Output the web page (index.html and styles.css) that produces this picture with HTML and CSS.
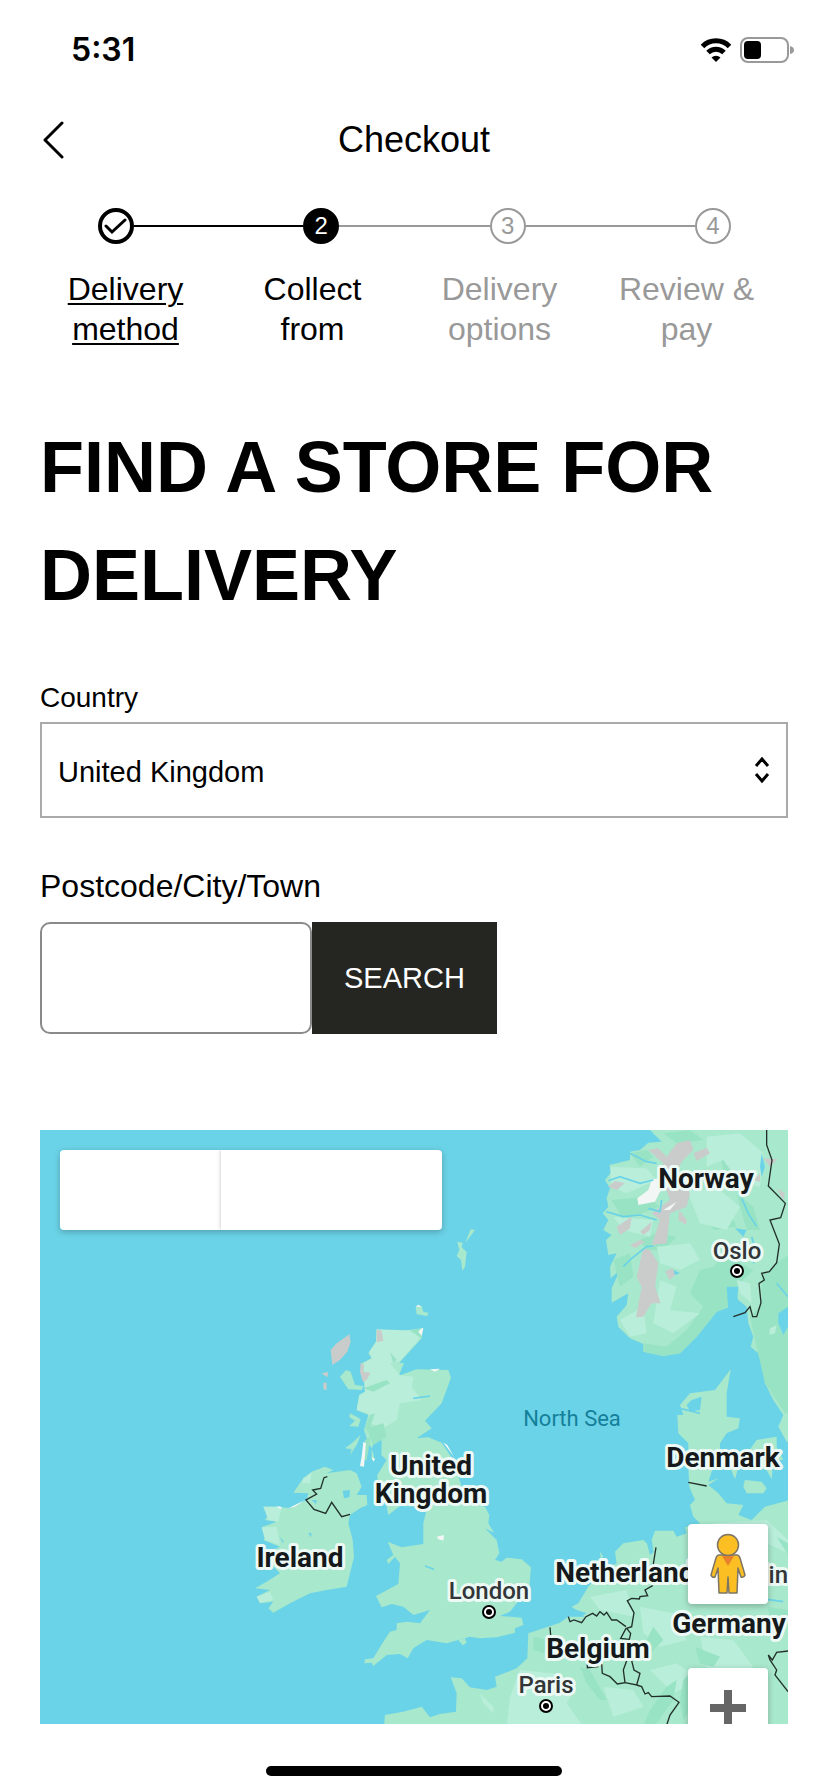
FILE: index.html
```
<!DOCTYPE html>
<html lang="en">
<head>
  <meta charset="UTF-8" />
  <meta name="viewport" content="width=device-width, initial-scale=1" />
  <title>Checkout</title>
  <link rel="stylesheet" href="styles.css">
</head>
<body>
  <div class="status-bar">
    <span class="time">5:31</span>
    <div class="status-icons">
      <svg width="32" height="24" viewBox="0 0 32 24" aria-hidden="true">
        <path d="M2.500 8.500a19 19 0 0 1 27 0" fill="none" stroke="#000" stroke-width="5" />
        <path d="M8 14.500a11.500 11.500 0 0 1 16 0" fill="none" stroke="#000" stroke-width="5" />
        <path d="M11.500 19.500a6.500 6.500 0 0 1 9 0L16 24z" />
      </svg>
      <svg width="54" height="26" viewBox="0 0 54 26" aria-hidden="true">
        <rect x="1" y="1" width="47" height="24" rx="7" fill="none" stroke="#999" stroke-width="2" />
        <rect x="4" y="4" width="17" height="18" rx="4" />
        <path d="M50 9q4 1 4 4t-4 4z" fill="#999" />
      </svg>
    </div>
  </div>

  <header class="top-bar">
    <button class="back-btn" type="button" aria-label="Back">
      <svg width="22" height="38" viewBox="0 0 22 38" aria-hidden="true">
        <path d="M20 2L3 19l17 17" fill="none" stroke="#000" stroke-width="3" stroke-linecap="round" stroke-linejoin="round" />
      </svg>
    </button>
    <h2>Checkout</h2>
  </header>

  <nav class="steps" aria-label="Checkout steps">
    <div class="track">
      <span class="circle done">
        <svg width="24" height="24" viewBox="0 0 24 24" aria-hidden="true">
          <path d="M2 12l6 6L21 6" fill="none" stroke="#000" stroke-width="3" stroke-linecap="round" />
        </svg>
      </span>
      <span class="line active"></span>
      <span class="circle current">2</span>
      <span class="line"></span>
      <span class="circle">3</span>
      <span class="line"></span>
      <span class="circle">4</span>
    </div>
    <div class="labels">
      <a href="#delivery">Delivery method</a>
      <span class="on">Collect from</span>
      <span>Delivery options</span>
      <span>Review &amp; pay</span>
    </div>
  </nav>

  <main>
    <h1>FIND A STORE FOR DELIVERY</h1>

    <form class="store-form">
      <label class="country-label" for="country">Country</label>
      <div class="select-wrap">
        <select id="country">
          <option>United Kingdom</option>
        </select>
        <svg class="arrows" width="16" height="26" viewBox="0 0 16 26" aria-hidden="true">
          <path d="M2 9l6-7 6 7M2 17l6 7 6-7" fill="none" stroke="#000" stroke-width="3" />
        </svg>
      </div>

      <label class="postcode-label" for="postcode">Postcode/City/Town</label>
      <div class="search-row">
        <input type="text" id="postcode" />
        <button class="search-btn" type="button">SEARCH</button>
      </div>
    </form>

    <div class="map">
      <svg class="map-canvas" viewBox="0 0 748 594" preserveAspectRatio="xMidYMin slice" role="img" aria-label="Map of stores">
        <g transform="scale(.33333)">
          <!-- Norway and Sweden -->
          <g transform="translate(1620 -30)">
            <path class="land" d="M210 30L245 65 205 68 180 90 150 95 150 120 88 135 95 155 75 180 90 205 80 235 85 260 68 280 85 300 70 330 95 345 78 360 85 405 110 400 90 440 92 475 120 450 95 505 95 548 145 520 140 555 110 590 115 620 150 655 190 672 190 695 250 708 300 700 350 650 410 575 450 560 455 500 475 540 500 560 505 610 520 650 512 680 535 700 545 730 555 790 580 840 610 885 595 920 620 965 630 965 630 30z" />
            <path class="land-dark" d="M630 400L590 430 545 470 545 550 510 590 530 680 555 790 615 880 630 880zM450 380L480 430 520 450 470 500 450 500 450 560 410 575 350 650 300 700 250 708 190 695 190 670 260 680 320 630 370 560 330 520 360 450 400 440z" />
            <path class="land-dark" d="M420 100L470 80 540 110 480 130 470 180 430 150zM250 40L330 30 370 60 290 70zM95 240L200 230 240 260 130 300zM150 100L200 90 220 110 180 140zM100 420L150 400 160 470 120 500zM180 360L230 340 290 350 250 390 200 390zM470 220L520 260 540 330 500 330zM380 280L440 260 470 320 400 330z" />
            <path class="land-light" d="M380 50L480 40 550 100 540 200 480 190 430 120 380 140zM90 140L200 145 230 180 140 220 95 200zM320 210L420 210 480 260 440 330 360 310zM230 380L330 370 360 420 300 450 240 430zM120 600L190 560 200 640 150 650zM240 480L290 500 270 570 360 580 280 640 220 610zM470 480L510 490 515 550 480 520zM570 625L590 615 585 640 568 645zM100 290L220 300 210 350 130 330z" />
            <path class="rock" d="M205 90L235 85 260 110 290 70 330 60 340 90 310 120 290 150 330 220 320 260 270 280 260 370 215 375 240 300 215 280 270 240 240 160 250 130zM340 100L380 83 390 100 350 123zM85 200L105 183 135 190 110 210zM110 320L155 290 150 325 120 345zM190 385L210 390 235 430 225 500 242 550 215 550 190 590 168 592 185 500 170 470zM150 375L180 360 195 365 165 385zM298 270L320 300 318 315 295 300zM255 455L275 445 290 460 270 480zM180 335L215 305 210 330 190 345zM550 115L592 118 570 140zM520 180L540 160 540 185zM590 205L615 220 610 240z" />
            <path class="snow" d="M240 140L265 200 240 215 225 245 175 255 172 235 205 210 215 180 235 175zM250 270L290 245 270 270z" />
            <path class="fjord" d="M85 182L120 170 180 190 220 180M78 275L130 290 180 285 230 300M205 265L240 275 245 240M130 440L155 415 200 380 220 378M150 100L200 125 230 130M485 235L505 280 530 320M515 350L530 400 520 430M590 490L624 530" />
            <path class="water" d="M545 100L555 140 545 170 540 140zM465 325L500 330 490 350zM440 500L475 500 470 560 445 570zM280 450L300 460 285 465zM595 580L624 560 624 620 610 645 595 610z" />
            <path class="border" d="M560 30V75L576 120 565 198 616 250 602 293 570 300 598 372 590 428 568 455 545 460 553 480 537 490 543 548 530 590 518 590 510 560 495 578 460 590" />
          </g>

          <!-- Great Britain -->
          <g transform="translate(600 240)">
            <path class="land" d="M548 355L545 385 478 458 492 460 476 497 530 478 625 480 633 503 605 580 555 632 575 655 530 685 565 682 605 698 640 750 665 830 665 870 735 890 748 915 745 940 762 968 735 955 770 990 778 1030 765 1050 785 1055 800 1043 845 1048 873 1072 868 1130 830 1180 810 1205 780 1218 845 1223 850 1245 825 1255 825 1268 770 1282 720 1285 690 1280 620 1300 560 1290 520 1315 503 1345 480 1332 440 1335 400 1368 395 1358 373 1360 375 1348 400 1345 430 1295 450 1265 470 1260 470 1240 500 1235 540 1240 570 1200 520 1215 490 1190 455 1182 425 1192 408 1158 475 1122 480 1060 465 1040 445 1062 440 1050 460 1035 443 995 485 1012 550 1002 550 940 562 890 480 888 445 915 440 890 460 860 412 820 412 795 440 750 424 735 425 690 402 700 395 715 385 700 372 660 385 615 362 605 350 600 358 555 375 545 372 515 365 460 395 445 385 430 408 395 410 358 430 370z" />
            <path class="land-light" d="M410 358L530 362 540 385 478 455 450 460 480 495 520 500 515 530 545 570 480 580 470 630 430 655 390 640 385 610 350 600 358 555 375 545 370 460 395 445 388 425 408 395z" />
            <path class="land-dark" d="M548 355L545 385 510 362zM380 655L430 640 440 680 400 705zM370 535L440 510 450 520 400 545zM375 690L392 680 380 750 372 750zM450 425L470 450 460 460zM390 615L405 610 385 665 375 655z" />
            <path class="land" d="M300 500L318 480 332 485 345 525 370 528 365 540 325 538zM330 610L350 620 362 628 355 650 328 648 345 632 328 622zM315 715L335 700 362 675 350 705 330 735 335 718zM652 95L668 98 665 112 680 125 675 170 667 183 663 150 650 138 658 120zM692 58L705 60 690 80 676 98zM527 290L545 288 550 305 565 308 562 318 530 313zM655 1290L675 1285 680 1298 668 1306zM395 715L405 750 395 750z" />
            <path class="rock" d="M328 373L332 395 322 425 300 450 277 465 272 420 290 400zM410 358L425 362 430 392 410 397zM362 458L372 465 370 485 392 488 380 510 368 515 360 485zM245 490L265 486 262 502zM250 518L260 518 260 540 250 538z" />
            <path class="snow" d="M370 695L378 700 372 770 360 768 365 740zM527 290L535 284 545 290zM545 355L550 355 545 378 535 365zM570 478L600 476 585 485zM610 698L622 705 642 740zM590 980L612 975 610 992 595 988zM395 740L405 748 400 755z" />
            <path class="fjord" d="M520 565L570 558M555 1068L582 1078" />
          </g>

          <!-- Ireland -->
          <g transform="translate(600 930)">
            <path class="land" d="M255 80L280 90 260 100 330 90 350 100 365 140 350 165 380 165 382 195 360 205 330 225 325 250 338 300 342 350 330 400 320 440 260 450 210 460 150 490 100 518 85 505 100 485 60 490 50 470 90 450 45 445 80 425 120 400 100 380 80 340 120 320 70 300 90 280 65 262 110 245 75 240 85 225 70 200 110 200 150 205 200 180 205 160 160 158 190 115 215 95z" />
            <path class="land-light" d="M70 200L125 200 115 245 85 240zM65 262L110 260 120 315 75 300zM190 115L215 98 210 130 185 130zM50 470L90 455 100 480 60 488z" />
            <path class="water" d="M308 152L330 150 328 172 312 175zM205 278L215 280 212 292zM118 288L132 306 128 308zM215 180L230 180 228 192z" />
            <path class="snow" d="M110 198L126 202 120 208zM145 205L195 180 165 200z" />
            <path class="border" d="M262 110L252 113 242 145 218 150 230 162 198 180 222 208 257 220 275 187 305 230 330 223" />
          </g>

          <!-- Denmark, the Netherlands, Belgium, France and Germany -->
          <g transform="translate(1380 930)">
            <path class="land" d="M692-212L645-150 570-140 540-105 550-75 532-75 535-20 565 10 565 80 568 140 585 180 570 195 580 230 600 250 555 262 560 280 530 290 520 272 465 272 455 300 460 330 430 300 370 310 345 335 350 370 300 400 265 440 235 490 215 500 255 530 205 530 180 548 85 580 82 655 50 685-15 710-10 740-40 750-90 742-115 715-148 712-130 760-132 815-180 822-210 832-235 800-290 815-345 825-348 860 870 860 870 180 795 200 755 240 715 225 730 195 680 190 655 160 625 135 655 115 625 125 640 80 660 30 660 10 680-20 715-35 720-65 680-70 680-140z" />
            <path class="land" d="M735 120L785 125 800 145 790 160 740 160 730 140zM690 80L715 80 705 118zM745 35L770 0 830-10 830 20 850 60 820 60 815 118 800 90 765 80zM300 335L310 350 302 355z" />
            <path class="land-light" d="M60 690L160 700 230 740 200 790 250 860 20 860 30 770zM270 470L380 450 400 530 300 510zM420 500L520 520 560 600 480 620 430 580zM600 590L700 600 760 680 680 720 620 680zM450 690L530 670 600 720 520 760zM640 250L800 240 864 300 864 340 780 300zM310 740L400 750 430 800 340 830zM-60 760L-20 800 -20 820 -50 790z" />
            <path class="land-dark" d="M500 740L530 720 520 780 470 850 430 860 450 810zM585 620L660 650 640 680 600 670zM240 680L270 690 320 780 300 780 260 730zM800 500L864 510 864 540 820 550zM460 560L490 600 450 640 430 620zM550 720L570 700 590 780 550 840 540 780zM100 590L150 600 130 640 100 630zM830 290L864 310 864 345zM680 720L780 700 800 730 720 750z" />
            <path class="water" d="M575-120L605-130 600-90 570-85 560-105zM215 505L260 520 240 530zM440 305L462 335 450 345z" />
            <path class="fjord" d="M800 478L850 485M210 520L235 520M540-95L600-80" />
            <path class="border" d="M468 322L460 372M458 437L435 450 443 467 420 470 418 477 395 475 382 482 402 518 395 560 380 565 392 580 388 598 362 595 378 565M205 530L210 545 222 540 245 548 258 530 278 520 290 528 300 515 312 525 320 517 335 540 350 540 378 560M150 562L152 585M262 672V683L295 680M305 672L307 700 330 710 352 732 375 728 370 690 380 662M395 662L402 690 420 700 410 735 375 728M410 735L425 740 435 762 445 758 455 770 510 768 537 787 510 825 500 855M565 127L620 138M864 633L830 637 817 660 805 645 810 660 830 690 825 705 864 755" />
          </g>
        </g>

        <text class="sea-name" x="532" y="296">North Sea</text>
        <g class="country-name">
          <text x="666" y="58">Norway</text>
          <text x="391" y="345">United<tspan x="391" dy="28">Kingdom</tspan></text>
          <text x="683" y="337">Denmark</text>
          <text x="260" y="437">Ireland</text>
          <text x="592" y="452">Netherlands</text>
          <text x="689" y="503">Germany</text>
          <text x="558" y="528">Belgium</text>
        </g>
        <g class="city-name">
          <text x="697" y="129">Oslo</text>
          <text x="449" y="469">London</text>
          <text x="506" y="563">Paris</text>
          <text x="717" y="453">Berlin</text>
        </g>
        <g class="city-dot">
          <circle cx="697" cy="141" r="6" /><circle class="dot" cx="697" cy="141" r="3" />
          <circle cx="449" cy="482" r="6" /><circle class="dot" cx="449" cy="482" r="3" />
          <circle cx="506" cy="576" r="6" /><circle class="dot" cx="506" cy="576" r="3" />
        </g>
      </svg>

      <div class="map-type">
        <button type="button" aria-label="Map"></button>
        <button type="button" aria-label="Satellite"></button>
      </div>

      <div class="map-controls">
        <button type="button" aria-label="Street View">
          <svg width="36" height="62" viewBox="0 0 36 62" aria-hidden="true">
            <g fill="#fbbf24" stroke="#7d7565" stroke-width="1.500" stroke-linejoin="round">
              <path d="M9 22h18q2 0 3 3l5 17q-1 3-4 2l-3-9-1 25h-8l-1-16-1 16H9L8 35l-3 9q-3 1-4-2l5-17q1-3 3-3z" />
              <circle cx="18" cy="12" r="10.500" />
            </g>
            <path d="M12 23h12l-6 10z" fill="#e8812b" />
          </svg>
        </button>
        <button type="button" aria-label="Zoom in">
          <svg width="36" height="36" viewBox="0 0 36 36" aria-hidden="true">
            <path d="M14 0h8v14h14v8H22v14h-8V22H0v-8h14z" fill="#666" />
          </svg>
        </button>
      </div>
    </div>
  </main>

  <div class="home-indicator"></div>
</body>
</html>
```
FILE: styles.css
```
* {
  box-sizing: border-box;
}
body {
  margin: 0;
  background: #fff;
  color: #000;
  font-family: "Liberation Sans", Arial, sans-serif;
  font-size: 32px;
  line-height: 40px;
}
button {
  border: none;
  padding: 0;
  font-family: inherit;
  cursor: pointer;
}
svg {
  display: block;
}

/* status bar */
.status-bar {
  display: flex;
  justify-content: space-between;
  align-items: center;
  height: 96px;
  padding: 3px 34px 0 71px;
}
.time {
  font-family: Inter, sans-serif;
  font-size: 32px;
  font-weight: 600;
}
.status-icons {
  display: flex;
  align-items: center;
  gap: 8px;
}

/* header */
.top-bar {
  display: grid;
  grid-template-columns: 40px 1fr 40px;
  align-items: center;
  height: 88px;
  padding: 0 40px;
}
.top-bar h2 {
  margin: 0;
  text-align: center;
  font-size: 36px;
  font-weight: normal;
}
.back-btn {
  background: none;
  padding-left: 2px;
}

/* steps */
.steps {
  padding: 24px 48px 0 32px;
  color: #999;
}
.track {
  display: grid;
  grid-template-columns: 36px 9fr 36px 8fr 36px 9fr 36px;
  align-items: center;
  padding: 0 49px 0 66px;
}
.circle {
  display: flex;
  justify-content: center;
  align-items: center;
  height: 36px;
  border: 2px solid #999;
  border-radius: 50%;
  font-size: 24px;
}
.circle.done {
  border: 4px solid #000;
}
.circle.current {
  background: #000;
  border-color: #000;
  color: #fff;
}
.line {
  height: 2px;
  background: #999;
}
.line.active {
  background: #000;
}
.labels {
  display: grid;
  grid-template-columns: repeat(4, 1fr);
  margin-top: 25px;
  text-align: center;
}
.labels > * {
  padding: 0 16px;
}
.labels a,
.labels .on {
  color: #000;
}
.labels a {
  text-decoration-thickness: 2px;
  text-underline-offset: 3px;
}

/* store search */
main {
  padding: 64px 40px 0;
}
h1 {
  margin: 0 0 49px;
  font-size: 72px;
  line-height: 108px;
}
label {
  display: block;
}
.country-label {
  margin-bottom: 4px;
  font-size: 28px;
}
.select-wrap {
  position: relative;
  margin-bottom: 48px;
}
select {
  display: block;
  width: 100%;
  height: 96px;
  padding: 4px 48px 0 16px;
  appearance: none;
  border: 2px solid #aaa;
  border-radius: 0;
  background: #fff;
  color: #000;
  font-family: inherit;
  font-size: 29px;
}
.arrows {
  position: absolute;
  top: 35px;
  right: 18px;
  pointer-events: none;
}
.postcode-label {
  margin-bottom: 16px;
}
.search-row {
  display: flex;
}
.search-row input {
  width: 272px;
  height: 112px;
  padding: 0 16px;
  border: 2px solid #8a8a8a;
  border-radius: 10px;
  font-family: inherit;
  font-size: 32px;
}
.search-btn {
  padding: 0 32px;
  background: #252622;
  color: #fff;
  font-size: 29px;
}

/* map */
.map {
  position: relative;
  margin-top: 96px;
  aspect-ratio: 748 / 594;
  overflow: hidden;
  background: #6bd3e7;
}
.map-canvas {
  width: 100%;
  height: 100%;
}
.land {
  fill: #a8e8cc;
}
.land-dark {
  fill: #98e3c4;
}
.land-light {
  fill: #b8eeda;
}
.rock {
  fill: #cacccb;
}
.snow {
  fill: #f2f6f5;
}
.water {
  fill: #6bd3e7;
}
.fjord {
  fill: none;
  stroke: #6bd3e7;
  stroke-width: 5;
}
.border {
  fill: none;
  stroke: #22302b;
  stroke-width: 4;
}
.map-canvas text {
  font-family: Roboto, sans-serif;
  text-anchor: middle;
}
.sea-name {
  fill: #14809a;
  font-size: 22px;
}
.country-name,
.city-name {
  stroke: #edf9f5;
  stroke-width: 6px;
  stroke-linejoin: round;
  paint-order: stroke;
}
.country-name {
  fill: #16191b;
  font-size: 28px;
  font-weight: 700;
}
.city-name {
  fill: #333638;
  font-size: 24px;
  font-weight: 500;
}
.city-dot circle {
  fill: #fff;
  stroke: #000;
  stroke-width: 2px;
}
.city-dot .dot {
  fill: #000;
  stroke: none;
}
.map-type {
  position: absolute;
  top: 20px;
  left: 20px;
  display: flex;
  height: 80px;
  border-radius: 4px;
  overflow: hidden;
  box-shadow: 0 2px 6px rgba(0, 0, 0, 0.25);
}
.map-type button {
  width: 161px;
  background: #fff;
}
.map-type button + button {
  width: 221px;
  box-shadow: 0 0 4px rgba(0, 0, 0, 0.25);
}
.map-controls {
  position: absolute;
  top: 394px;
  right: 20px;
  display: flex;
  flex-direction: column;
  gap: 64px;
}
.map-controls button {
  display: flex;
  justify-content: center;
  align-items: center;
  width: 80px;
  height: 80px;
  border-radius: 4px;
  background: #fff;
  box-shadow: 0 2px 6px rgba(0, 0, 0, 0.25);
}

.home-indicator {
  width: 296px;
  height: 10px;
  margin: 42px auto 16px;
  border-radius: 5px;
  background: #000;
}
```
